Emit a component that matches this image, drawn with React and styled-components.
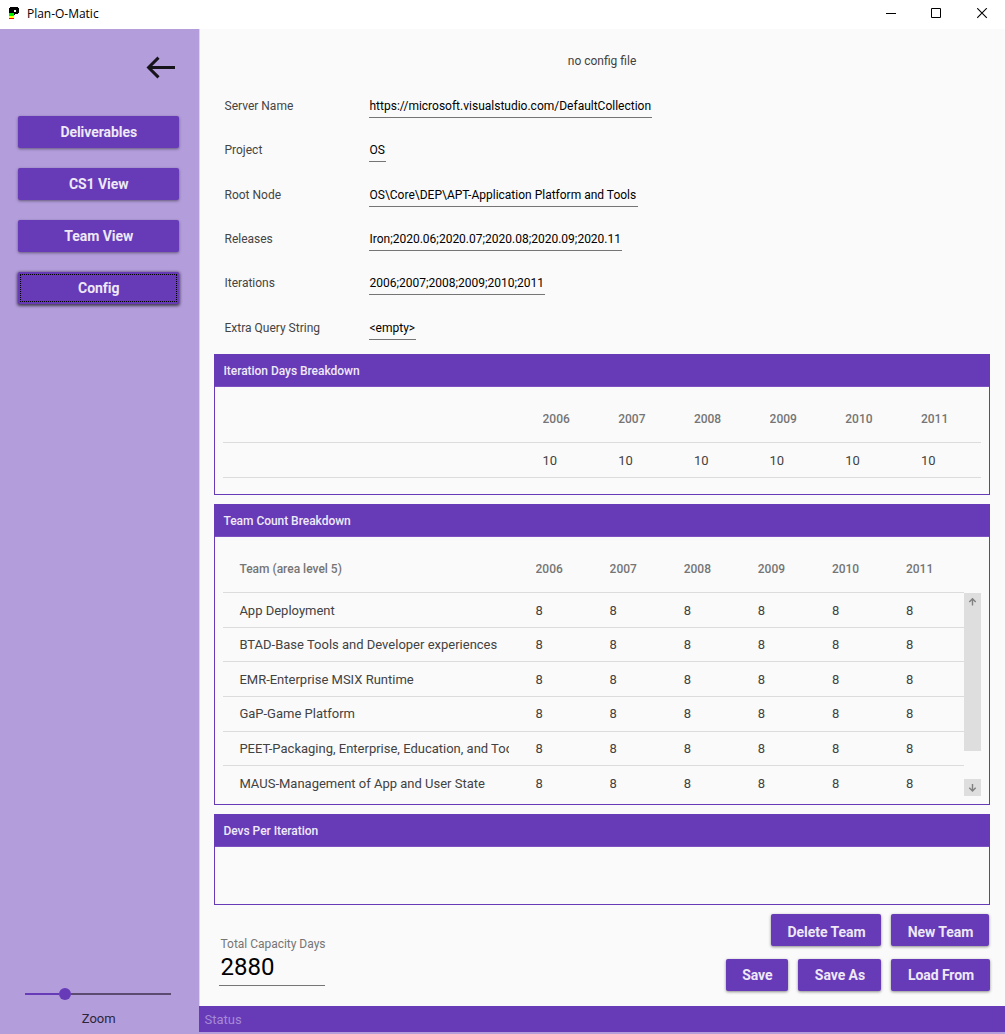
import React from "react";
import styled, { createGlobalStyle } from "styled-components";

const purple = "#673ab7";
const lilac = "#b39ddb";
const paper = "#fafafa";

const GlobalStyle = createGlobalStyle`
  *, *::before, *::after { box-sizing: border-box; }
  body {
    margin: 0;
    font-family: Roboto, "Liberation Sans", sans-serif;
    background: ${lilac};
  }
`;

const Window = styled.div`
  width: 1005px;
  height: 1034px;
  display: flex;
  flex-direction: column;
  overflow: hidden;
  background: ${lilac};
`;

const TitleBar = styled.header`
  height: 29px;
  flex: none;
  display: flex;
  align-items: center;
  background: #fff;
  padding: 0 17px 2px 8px;
`;

const AppLogo = styled.svg`
  width: 12px;
  height: 13px;
  display: block;
`;

const Title = styled.h1`
  margin: 0 auto 0 7px;
  font: 400 12px/16px "Open Sans", "Noto Sans", sans-serif;
  letter-spacing: -0.02px;
  color: #000;
`;

const WindowControls = styled.div`
  display: flex;
  gap: 35px;
  svg {
    display: block;
    width: 11px;
    height: 11px;
  }
`;

const Body = styled.div`
  flex: 1;
  min-height: 0;
  display: flex;
`;

const Sidebar = styled.nav`
  width: 199px;
  flex: none;
  display: flex;
  flex-direction: column;
  padding: 26.5px 19.6px 7px 18px;
  background: ${lilac};
`;

const BackButton = styled.button`
  align-self: flex-end;
  margin: 0 3.4px 36.5px 0;
  padding: 0;
  border: 0;
  background: none;
  svg {
    display: block;
  }
`;

const NavList = styled.div`
  display: flex;
  flex-direction: column;
  gap: 20px;
`;

const Button = styled.button`
  height: 32px;
  width: ${(p) => (p.$width ? `${p.$width}px` : "auto")};
  padding: 0;
  border: 0;
  border-radius: 2px;
  background: ${purple};
  color: #eee8f7;
  font: 700 14px/32px Roboto, "Liberation Sans", sans-serif;
  letter-spacing: -0.06px;
  text-align: center;
  white-space: nowrap;
  box-shadow: ${(p) =>
    p.$focused ? "0 1px 3px 1px rgba(0,0,0,.6)" : "0 1px 3px rgba(0,0,0,.45)"};
  outline: ${(p) => (p.$focused ? "1px dotted #000" : "none")};
  outline-offset: -3px;
`;

const ZoomControl = styled.div`
  margin-top: auto;
  display: flex;
  flex-direction: column;
  align-items: center;
  gap: 10px;
  font-size: 13px;
  line-height: 17px;
  color: #2d2638;
`;

const SliderTrack = styled.div`
  width: 146px;
  height: 12px;
  margin-right: 1.4px;
  display: flex;
  align-items: center;
`;

const SliderFill = styled.div`
  width: 34px;
  height: 2px;
  background: ${purple};
`;

const SliderThumb = styled.div`
  width: 12px;
  height: 12px;
  border-radius: 50%;
  background: ${purple};
`;

const SliderRest = styled.div`
  flex: 1;
  height: 2px;
  background: #5c4a70;
`;

const Content = styled.main`
  flex: 1;
  min-width: 0;
  display: flex;
  flex-direction: column;
  padding-bottom: 2px;
`;

const Page = styled.section`
  flex: 1;
  min-height: 0;
  display: flex;
  flex-direction: column;
  padding: 24px 15px 0 14px;
  border-left: 1px solid #ddd5ec;
  background: ${paper};
`;

const FileNote = styled.div`
  height: 16px;
  margin-bottom: 22px;
  text-align: center;
  font-size: 12px;
  line-height: 16px;
  color: #424242;
`;

const Form = styled.div`
  display: grid;
  grid-template-columns: 145px 1fr;
  grid-auto-rows: 44.35px;
  height: 263px;
  padding-left: 10px;
`;

const Label = styled.label`
  padding: 7px 0 0 0.5px;
  font-size: 12px;
  line-height: 16px;
  color: #444;
`;

const Field = styled.div`
  justify-self: start;
  align-self: start;
  width: ${(p) => p.$width}px;
  height: 27px;
  padding: 7px 0 0 0.5px;
  border-bottom: 1px solid #757575;
  font-size: 12px;
  line-height: 16px;
  white-space: nowrap;
  color: #000;
`;

const Panel = styled.section`
  height: ${(p) => p.$height}px;
  flex: none;
  margin-bottom: 9px;
  border: 1px solid ${purple};
`;

const PanelTitle = styled.h2`
  margin: 0;
  height: 32px;
  padding: 0 8.5px;
  border-bottom: 1px solid #7b52c0;
  background: ${purple};
  color: #efeaf7;
  font-size: 12px;
  font-weight: 500;
  line-height: 33px;
  letter-spacing: -0.04px;
`;

const PanelBody = styled.div`
  display: flex;
  padding: 0 8px;
`;

const Table = styled.div`
  width: ${(p) => p.$width}px;
  height: ${(p) => p.$height}px;
  overflow: hidden;
`;

const Row = styled.div`
  display: grid;
  grid-template-columns: ${(p) => p.$first}px repeat(6, ${(p) => p.$col}px);
  height: ${(p) => (p.$head ? "56px" : "34.65px")};
  line-height: ${(p) => (p.$head ? "65px" : "35px")};
  border-bottom: 1px solid #dcdcdc;
  font-size: ${(p) => (p.$head ? 12 : 13)}px;
  font-weight: ${(p) => (p.$head ? 500 : 400)};
  color: ${(p) => (p.$head ? "#757575" : "#424242")};
`;

const Cell = styled.div`
  margin-top: -0.47px;
  overflow: hidden;
  white-space: nowrap;
`;

const NameCell = styled(Cell)`
  margin: -0.47px 27px 0 16.4px;
`;

const ScrollBar = styled.div`
  width: 17px;
  height: 203px;
  margin-top: 56px;
  display: flex;
  flex-direction: column;
  justify-content: space-between;
`;

const ScrollPart = styled.div`
  height: ${(p) => p.$height}px;
  background: #dedede;
  svg {
    display: block;
  }
`;

const Footer = styled.div`
  display: flex;
  justify-content: space-between;
`;

const Capacity = styled.div`
  width: 106px;
  height: 72px;
  margin-left: 5px;
  padding: 22px 0 0 1.5px;
  border-bottom: 1px solid #757575;
`;

const CapacityLabel = styled.div`
  font-size: 12px;
  line-height: 16px;
  letter-spacing: -0.02px;
  white-space: nowrap;
  color: #757575;
`;

const CapacityValue = styled.div`
  font-size: 24px;
  line-height: 30px;
  color: #000;
`;

const Actions = styled.div`
  display: flex;
  flex-direction: column;
  gap: 13px;
`;

const ActionRow = styled.div`
  display: flex;
  justify-content: flex-end;
  gap: ${(p) => p.$gap}px;
  padding-right: ${(p) => p.$inset || 0}px;
  ${Button} {
    padding: ${(p) => p.$nudge || 0}px 0 0 1px;
  }
`;

const StatusBar = styled.footer`
  height: 26px;
  flex: none;
  padding-left: 5.5px;
  background: ${purple};
  color: #a68ad6;
  font-size: 13px;
  line-height: 27px;
`;

const fields = [
  ["Server Name", "https://microsoft.visualstudio.com/DefaultCollection", 283],
  ["Project", "OS", 17],
  ["Root Node", "OS\\Core\\DEP\\APT-Application Platform and Tools", 269],
  ["Releases", "Iron;2020.06;2020.07;2020.08;2020.09;2020.11", 253],
  ["Iterations", "2006;2007;2008;2009;2010;2011", 176],
  ["Extra Query String", "<empty>", 47],
];

const iterations = ["2006", "2007", "2008", "2009", "2010", "2011"];

const teams = [
  "App Deployment",
  "BTAD-Base Tools and Developer experiences",
  "EMR-Enterprise MSIX Runtime",
  "GaP-Game Platform",
  "PEET-Packaging, Enterprise, Education, and Tools",
  "MAUS-Management of App and User State",
];

function TableRow({ name, values, head, first, col }) {
  return (
    <Row $head={head} $first={first} $col={col}>
      <NameCell>{name}</NameCell>
      {values.map((v, i) => (
        <Cell key={i}>{v}</Cell>
      ))}
    </Row>
  );
}

function ScrollArrow({ down }) {
  return (
    <svg width="17" height="17" viewBox="0 0 17 17" fill="none" stroke="#808080" strokeWidth="1.4">
      <path d={down ? "M8.5 5v7M5.3 8.8l3.2 3.2 3.2-3.2" : "M8.5 12.5v-7M5.3 9l3.2-3.2L11.7 9"} />
    </svg>
  );
}

export default function App() {
  return (
    <Window>
      <GlobalStyle />
      <TitleBar>
        <AppLogo viewBox="0 0 12 13" shapeRendering="crispEdges">
          <path d="M2 0h8v1h1v5h-1v1H7v1H1V1h1z" fill="#000" />
          <path d="M6 3h2v2H6z" fill="#fff" />
          <path d="M1 6h5v3H1z" fill="#00f000" />
          <path d="M1 9h5v2H1z" fill="#ff0" />
          <path d="M1 11h5v1H1z" fill="#f00" />
        </AppLogo>
        <Title>Plan-O-Matic</Title>
        <WindowControls>
          <svg viewBox="0 0 11 11"><path d="M1 5.5h10" stroke="#000" /></svg>
          <svg viewBox="0 0 11 11"><path d="M.5.5h9v9h-9z" stroke="#000" fill="none" /></svg>
          <svg viewBox="0 0 11 11"><path d="M.2.2l9.6 9.6M9.8.2L.2 9.8" stroke="#000" strokeWidth="1.1" /></svg>
        </WindowControls>
      </TitleBar>
      <Body>
        <Sidebar>
          <BackButton aria-label="Back">
            <svg width="30" height="24" viewBox="0 0 30 24" fill="none" stroke="#17141c" strokeWidth="3">
              <path d="M29 11.5H3M12.5 1.6L2.6 11.5l9.9 9.9" />
            </svg>
          </BackButton>
          <NavList>
            <Button>Deliverables</Button>
            <Button>CS1 View</Button>
            <Button>Team View</Button>
            <Button $focused>Config</Button>
          </NavList>
          <ZoomControl>
            <SliderTrack>
              <SliderFill />
              <SliderThumb />
              <SliderRest />
            </SliderTrack>
            <span>Zoom</span>
          </ZoomControl>
        </Sidebar>
        <Content>
          <Page>
            <FileNote>no config file</FileNote>
            <Form>
              {fields.map(([label, value, width]) => (
                <React.Fragment key={label}>
                  <Label>{label}</Label>
                  <Field $width={width}>{value}</Field>
                </React.Fragment>
              ))}
            </Form>
            <Panel $height={141}>
              <PanelTitle>Iteration Days Breakdown</PanelTitle>
              <PanelBody>
                <Table $width={758} $height={91}>
                  <TableRow head name="" values={iterations} first={319.5} col={75.7} />
                  <TableRow name="" values={iterations.map(() => "10")} first={319.5} col={75.7} />
                </Table>
              </PanelBody>
            </Panel>
            <Panel $height={301}>
              <PanelTitle>Team Count Breakdown</PanelTitle>
              <PanelBody>
                <Table $width={741} $height={259}>
                  <TableRow head name="Team (area level 5)" values={iterations} first={312.5} col={74.1} />
                  {teams.map((t) => (
                    <TableRow key={t} name={t} values={iterations.map(() => "8")} first={312.5} col={74.1} />
                  ))}
                </Table>
                <ScrollBar>
                  <ScrollPart $height={158}><ScrollArrow /></ScrollPart>
                  <ScrollPart $height={17}><ScrollArrow down /></ScrollPart>
                </ScrollBar>
              </PanelBody>
            </Panel>
            <Panel $height={91}>
              <PanelTitle>Devs Per Iteration</PanelTitle>
            </Panel>
            <Footer>
              <Capacity>
                <CapacityLabel>Total Capacity Days</CapacityLabel>
                <CapacityValue>2880</CapacityValue>
              </Capacity>
              <Actions>
                <ActionRow $inset={1} $gap={10} $nudge={2}>
                  <Button $width={110}>Delete Team</Button>
                  <Button $width={98}>New Team</Button>
                </ActionRow>
                <ActionRow $gap={10.3}>
                  <Button $width={62.2}>Save</Button>
                  <Button $width={82.5}>Save As</Button>
                  <Button $width={99}>Load From</Button>
                </ActionRow>
              </Actions>
            </Footer>
          </Page>
          <StatusBar>Status</StatusBar>
        </Content>
      </Body>
    </Window>
  );
}
